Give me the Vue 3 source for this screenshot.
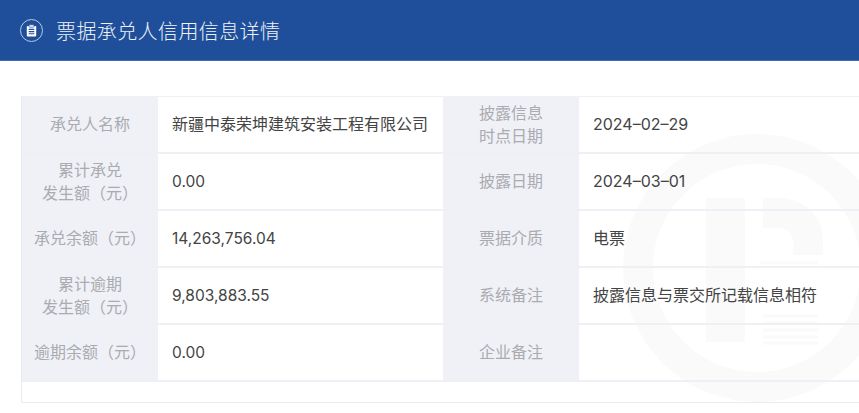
<script setup>
const rows = [
  { a: ['承兑人名称'], b: '新疆中泰荣坤建筑安装工程有限公司', c: ['披露信息', '时点日期'], d: '2024–02–29' },
  { a: ['累计承兑', '发生额（元）'], b: '0.00', num: true, c: ['披露日期'], d: '2024–03–01' },
  { a: ['承兑余额（元）'], b: '14,263,756.04', num: true, c: ['票据介质'], d: '电票' },
  { a: ['累计逾期', '发生额（元）'], b: '9,803,883.55', num: true, c: ['系统备注'], d: '披露信息与票交所记载信息相符' },
  { a: ['逾期余额（元）'], b: '0.00', num: true, c: ['企业备注'], d: '' },
]
</script>

<template>
  <div class="page">
    <svg class="mark" width="859" height="413" viewBox="0 0 859 413" aria-hidden="true">
      <circle cx="757" cy="268" r="119" fill="none" stroke="#fafafb" stroke-width="30" />
      <rect x="706" y="198" width="39" height="144" fill="#fafafb" />
      <path d="M763 198h17c24 0 43 20 43 40v17h-30v-12c0-9-6-15-15-15h-15z" fill="#fafafb" />
      <path d="M760 263h58M763 316h55M763 323h55M763 330h55M763 337h55M763 343h55" stroke="#fafafb" stroke-width="3" fill="none" />
    </svg>
    <header class="bar">
      <span class="badge">
        <svg width="25" height="25" viewBox="0 0 25 25" fill="none">
          <circle cx="12.5" cy="12.5" r="11" stroke="#b9c9e2" stroke-width="1" />
          <path d="M8.6 8h7.8a.8.8 0 0 1 .8.8v9a.8.8 0 0 1-.8.8H8.6a.8.8 0 0 1-.8-.8v-9a.8.8 0 0 1 .8-.8z" fill="#fff" />
          <rect x="10" y="6.8" width="5" height="2.4" rx=".6" fill="#fff" stroke="#1f4f9a" stroke-width=".7" />
          <path d="M9.7 11.4h5.6M9.7 13.6h5.6M9.7 15.8h5.6" stroke="#1f4f9a" stroke-width="1.1" />
        </svg>
      </span>
      <h1>票据承兑人信用信息详情</h1>
    </header>
    <section class="table">
      <div v-for="(r, i) in rows" :key="i" class="row">
        <div class="label"><span v-for="t in r.a" :key="t">{{ t }}</span></div>
        <div class="value" :class="{ num: r.num }">{{ r.b }}</div>
        <div class="label"><span v-for="t in r.c" :key="t">{{ t }}</span></div>
        <div class="value">{{ r.d }}</div>
      </div>
      <div class="foot"></div>
    </section>
  </div>
</template>

<style>
html, body { margin: 0; background: #fff; overflow: hidden; }
</style>

<style scoped>
.page {
  position: relative;
  width: 859px;
  height: 413px;
  overflow: hidden;
  background: #fff;
  font-family: Inter, "Noto Sans CJK SC", sans-serif;
}
.mark { position: absolute; left: 0; top: 0; }
.bar {
  position: relative;
  height: 60px;
  border-bottom: 1px solid #3f6cb0;
  background: #1f4f9a;
  display: flex;
  align-items: center;
  padding-left: 19px;
  gap: 12px;
}
.badge { display: flex; }
h1 {
  margin: 0;
  font-size: 20px;
  font-weight: 300;
  color: #eef2f8;
  letter-spacing: 0.4px;
}
.table {
  position: relative;
  margin: 35px 0 0 21px;
  border-top: 1px solid #f0f1f6;
  border-left: 1px solid #e8ebf2;
  border-bottom: 1px solid #e8ebf2;
  height: 305px;
  width: 850px;
}
.row {
  display: grid;
  grid-template-columns: 136px 285px 136px 1fr;
  height: 55px;
  border-bottom: 2px solid #eef0f6;
}
.label {
  background: #f0f1f6;
  color: #a9abb1;
  font-size: 16px;
  line-height: 23px;
  display: flex;
  flex-direction: column;
  align-items: center;
  justify-content: center;
}
.value {
  color: #444;
  font-size: 16px;
  line-height: 23px;
  display: flex;
  align-items: center;
  padding-left: 14px;
}
.value.num { font-size: 15.5px; }
.foot { height: 19px; }
</style>
